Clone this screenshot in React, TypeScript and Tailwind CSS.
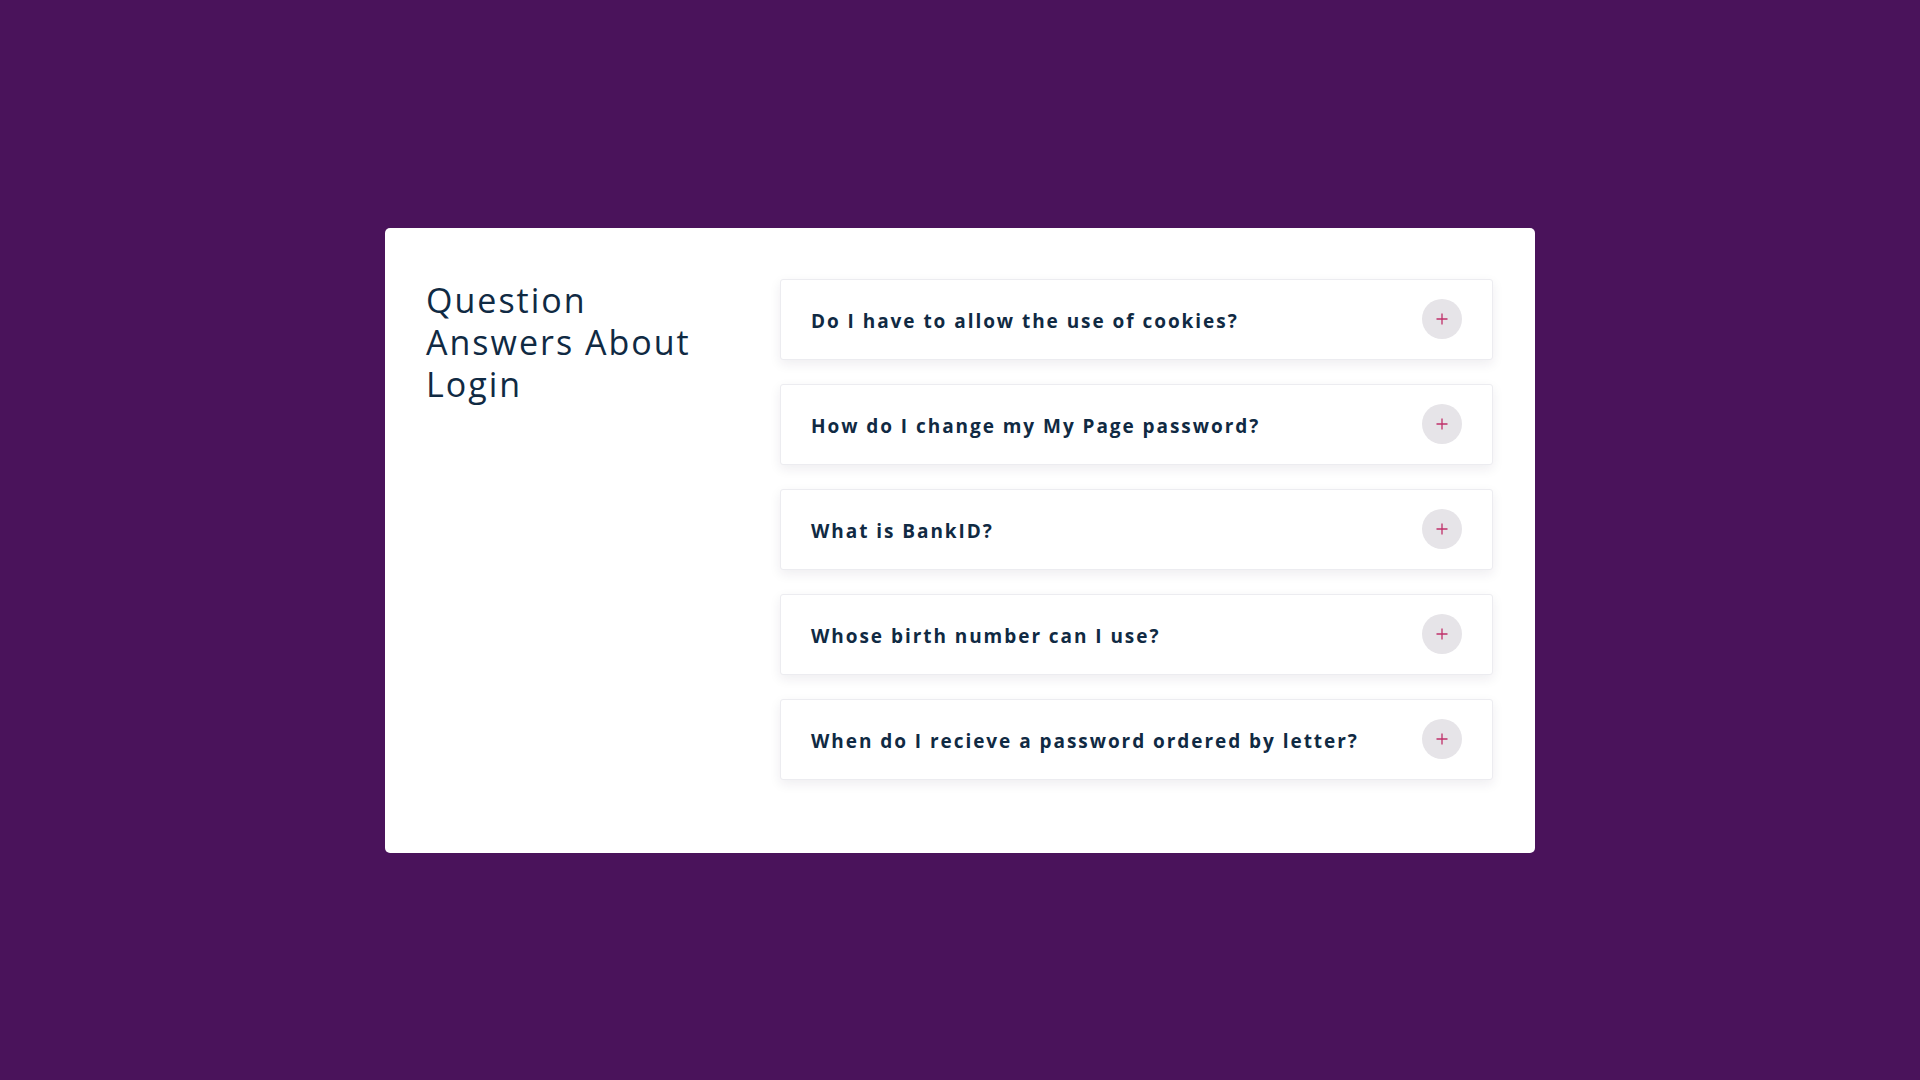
import React from "react";

const questions = [
  "Do I have to allow the use of cookies?",
  "How do I change my My Page password?",
  "What is BankID?",
  "Whose birth number can I use?",
  "When do I recieve a password ordered by letter?",
];

function Plus() {
  return (
    <svg width="12" height="12" viewBox="0 0 12 12" fill="none">
      <path d="M6 0.5V11.5M0.5 6H11.5" stroke="#c0306a" strokeWidth="1.3" />
    </svg>
  );
}

export default function App() {
  return (
    <div
      className="w-[1920px] h-[1080px] bg-[#4a135b] flex items-center justify-center"
      style={{ fontFamily: '"Open Sans", "Noto Sans", sans-serif' }}
    >
      <div className="w-[1150px] h-[625px] bg-white rounded-[5px] flex pl-[41px] pt-[51px]">
        <div className="w-[354px] shrink-0">
          <h1 className="text-[34px] leading-[42px] tracking-[2px] text-[#102a43] font-medium">
            Question
            <br />
            Answers About
            <br />
            Login
          </h1>
        </div>
        <div className="w-[713px] flex flex-col gap-[24px]">
          {questions.map((q) => (
            <div
              key={q}
              className="h-[81px] rounded-[3px] border border-[#ececf0] bg-white shadow-[0_4px_12px_rgba(40,20,60,0.08)] flex items-center justify-between pl-[30px] pr-[30px]"
            >
              <span className="pt-[5px] text-[19px] font-bold tracking-[1.95px] text-[#102a43]">{q}</span>
              <div className="w-[40px] h-[40px] rounded-full bg-[#e6e4e8] flex items-center justify-center">
                <Plus />
              </div>
            </div>
          ))}
        </div>
      </div>
    </div>
  );
}
